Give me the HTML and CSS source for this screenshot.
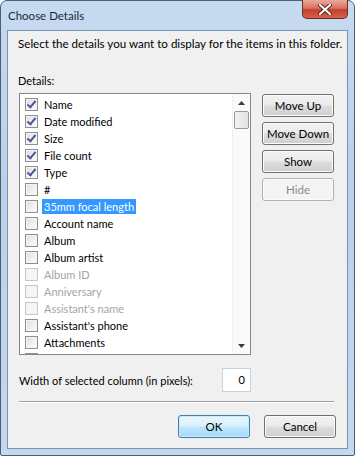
FILE: index.html
```html
<!DOCTYPE html>
<html lang="en">
<head>
    <meta charset="UTF-8">
    <meta name="viewport" content="width=device-width, initial-scale=1.0">
    <title>Choose Details</title>
    <link rel="stylesheet" href="styles.css">
</head>
<body>
    <div class="window">
        <div class="titlebar">
            <span class="title">Choose Details</span>
            <div class="closeBtn">
                <svg width="14" height="11" viewBox="0 0 14 11">
                    <path d="M2 1 L12 10 M12 1 L2 10" stroke="#5a2018" stroke-width="4" stroke-linecap="round"/>
                    <path d="M2 1 L12 10 M12 1 L2 10" stroke="#ffffff" stroke-width="2.2" stroke-linecap="round"/>
                </svg>
            </div>
        </div>
        <div class="client">
            <p class="intro">Select the details you want to display for the items in this folder.</p>
            <p class="label">Details:</p>
            <div class="mainRow">
                <div class="listBox">
                    <div class="items">
                        <div class="item"><span class="check checked"></span><span class="itemText">Name</span></div>
                        <div class="item"><span class="check checked"></span><span class="itemText">Date modified</span></div>
                        <div class="item"><span class="check checked"></span><span class="itemText">Size</span></div>
                        <div class="item"><span class="check checked"></span><span class="itemText">File count</span></div>
                        <div class="item"><span class="check checked"></span><span class="itemText">Type</span></div>
                        <div class="item"><span class="check"></span><span class="itemText">#</span></div>
                        <div class="item"><span class="check"></span><span class="itemText selected">35mm focal length</span></div>
                        <div class="item"><span class="check"></span><span class="itemText">Account name</span></div>
                        <div class="item"><span class="check"></span><span class="itemText">Album</span></div>
                        <div class="item"><span class="check"></span><span class="itemText">Album artist</span></div>
                        <div class="item faded"><span class="check"></span><span class="itemText">Album ID</span></div>
                        <div class="item faded"><span class="check"></span><span class="itemText">Anniversary</span></div>
                        <div class="item faded"><span class="check"></span><span class="itemText">Assistant's name</span></div>
                        <div class="item"><span class="check"></span><span class="itemText">Assistant's phone</span></div>
                        <div class="item"><span class="check"></span><span class="itemText">Attachments</span></div>
                        <div class="item cut"><span class="check"></span></div>
                    </div>
                    <div class="scrollbar">
                        <div class="arrow">
                            <svg width="7" height="4" viewBox="0 0 7 4"><path d="M0 4 L3.5 0 L7 4 Z" fill="#3a3a3a"/></svg>
                        </div>
                        <div class="thumb"></div>
                        <div class="track"></div>
                        <div class="arrow">
                            <svg width="7" height="4" viewBox="0 0 7 4"><path d="M0 0 L3.5 4 L7 0 Z" fill="#3a3a3a"/></svg>
                        </div>
                    </div>
                </div>
                <div class="sideButtons">
                    <button class="btn">Move Up</button>
                    <button class="btn">Move Down</button>
                    <button class="btn">Show</button>
                    <button class="btn" disabled>Hide</button>
                </div>
            </div>
            <div class="widthRow">
                <span>Width of selected column (in pixels):</span>
                <div class="widthBox">0</div>
            </div>
            <div class="separator"></div>
            <div class="bottomButtons">
                <button class="btn defaultBtn">OK</button>
                <button class="btn">Cancel</button>
            </div>
        </div>
    </div>
</body>
</html>
```

FILE: styles.css
```css
body {
    margin: 0;
    background-color: #ffffff;
    font-family: Lato, "Noto Sans", sans-serif;
    font-size: 11px;
    color: #000000;
}

.window {
    width: 353px;
    height: 454px;
    border: 1px solid #4d5d73;
    border-radius: 7px 7px 2px 2px;
    background: linear-gradient(to bottom, #c6daf0 0%, #bad1eb 40%, #c4d8ef 100%);
    display: flex;
    flex-direction: column;
}

.titlebar {
    height: 29px;
    display: flex;
    justify-content: space-between;
    align-items: flex-start;
    padding: 0 6px 0 7px;
}

.title {
    line-height: 16px;
    margin-top: 7px;
    font-size: 11.5px;
    color: #1b2a3c;
}

.closeBtn {
    width: 44px;
    height: 18px;
    margin-top: -1px;
    border: 1px solid #6b2d24;
    border-top: none;
    border-radius: 0 0 5px 5px;
    background: linear-gradient(to bottom, #e9a99c 0%, #d9715f 45%, #c2412c 55%, #d9604a 100%);
    display: flex;
    align-items: center;
    justify-content: center;
}

.client {
    margin: 0 6px 6px 6px;
    flex: 1;
    border: 1px solid #7d93ad;
    background-color: #f0f0f0;
    padding: 5px 11px 0 10px;
}

.intro {
    margin: 0;
    line-height: 16px;
    white-space: nowrap;
    font-size: 11.6px;
}

.label {
    margin: 21px 0 4px 0;
    line-height: 16px;
}

.mainRow {
    display: flex;
    gap: 11px;
}

.listBox {
    width: 230px;
    height: 260px;
    margin-left: 1px;
    border: 1px solid #828790;
    background-color: #ffffff;
    display: flex;
    overflow: hidden;
}

.items {
    flex: 1;
    padding: 2px 0 0 5px;
}

.item {
    height: 17px;
    display: flex;
    align-items: center;
    gap: 4px;
}

.check {
    width: 11px;
    height: 11px;
    border: 1px solid #8e8f8f;
    background: linear-gradient(135deg, #dcdcdc 0%, #f2f2f2 60%, #fbfbfb 100%);
    box-shadow: inset 0 0 0 1px #f4f4f4;
    position: relative;
    flex-shrink: 0;
}

.check.checked::after {
    content: "";
    position: absolute;
    left: 3px;
    top: 0px;
    width: 3px;
    height: 7px;
    border: solid #4a5a99;
    border-width: 0 2px 2px 0;
    transform: rotate(40deg);
}

.itemText {
    padding: 0 2px;
    line-height: 15px;
}

.selected {
    background-color: #3399ff;
    color: #ffffff;
}

.faded {
    color: #a5a5a5;
}

.faded .check {
    border-color: #c8c8c8;
    background: #f6f6f6;
}

.scrollbar {
    width: 17px;
    display: flex;
    flex-direction: column;
    background-color: #fafafa;
    border-left: 1px solid #f0f0f0;
}

.arrow {
    height: 17px;
    display: flex;
    align-items: center;
    justify-content: center;
}

.thumb {
    height: 16px;
    margin: 0 1px;
    border: 1px solid #9a9a9a;
    border-radius: 2px;
    background: linear-gradient(to right, #f3f3f3, #e2e2e2);
}

.track {
    flex: 1;
}

.sideButtons {
    display: flex;
    flex-direction: column;
    gap: 5px;
    padding-top: 1px;
}

.btn {
    width: 72px;
    height: 23px;
    font-family: Lato, "Noto Sans", sans-serif;
    font-size: 11.5px;
    color: #000000;
    border: 1px solid #707070;
    border-radius: 3px;
    background: linear-gradient(to bottom, #f2f2f2 0%, #ebebeb 48%, #dddddd 52%, #cfcfcf 100%);
    box-shadow: inset 0 0 0 1px #fcfcfc;
    padding: 0;
}

.btn:disabled {
    color: #8a8a8a;
    border-color: #adb2b5;
    background: #f4f4f4;
}

.defaultBtn {
    border-color: #3c7fb1;
    background: linear-gradient(to bottom, #eaf6fd 0%, #d9f0fc 48%, #bee6fd 52%, #a7d9f5 100%);
    box-shadow: inset 0 0 0 1px #c8ecfc;
}

.widthRow {
    display: flex;
    align-items: center;
    justify-content: space-between;
    margin-top: 13px;
    margin-left: 1px;
    width: 232px;
}

.widthBox {
    width: 22px;
    height: 22px;
    border: 1px solid #c9d1d9;
    background-color: #ffffff;
    line-height: 22px;
    text-align: right;
    padding-right: 5px;
}

.separator {
    margin-top: 9px;
    height: 1px;
    margin-left: 1px;
    margin-right: 2px;
    background-color: #a0a0a0;
    border-bottom: 1px solid #ffffff;
}

.bottomButtons {
    display: flex;
    justify-content: flex-end;
    gap: 14px;
    margin-top: 12px;
}
```
